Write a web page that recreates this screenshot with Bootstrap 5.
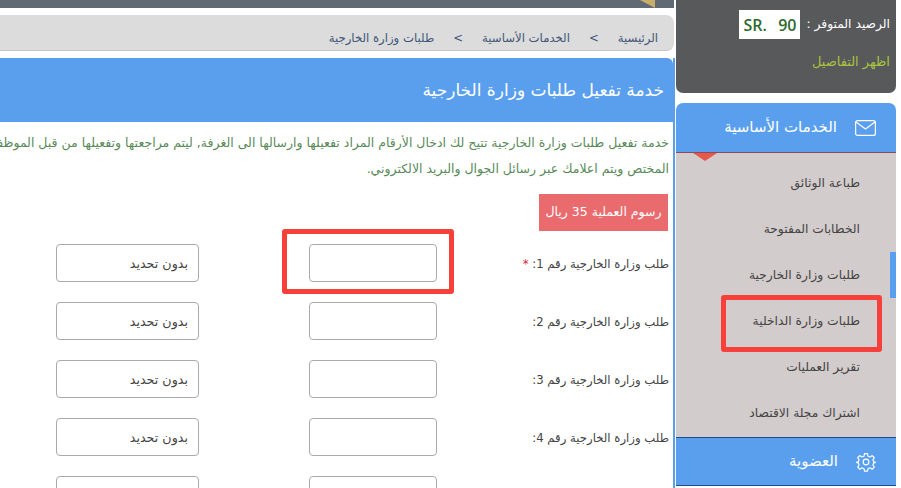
<!DOCTYPE html>
<html lang="ar" dir="rtl">
<head>
  <meta charset="UTF-8" />
  <meta name="viewport" content="width=device-width, initial-scale=1.0"/>
  <title>خدمة تفعيل طلبات وزارة الخارجية</title>
  <link href="https://cdn.jsdelivr.net/npm/bootstrap@5.3.0/dist/css/bootstrap.min.css" rel="stylesheet">
  <style>
    html, body { height: 488px; overflow: hidden; }
    body { font-family: "DejaVu Sans", "Liberation Sans", sans-serif; font-size: 11.7px; color: #444; background: #fff; }
    .page-wrap { width: 901px; height: 488px; overflow: hidden; padding-right: 5px; }
    .side-col { width: 220px; flex: none; }
    .main-col { width: 676px; flex: none; }
    .balance-box { height: 93px; background: #58595b; border-radius: 0 0 7px 7px; padding: 10px 6px 0 0; color: #fff; font-size: 12.3px; }
    .balance-row { gap: 6px; }
    .balance-val { background: #fff; color: #2d6a2d; font-family: "Open Sans", sans-serif; font-size: 16px; width: 61px; height: 29px; font-weight: 600; direction: ltr; }
    .balance-link { color: #a9c23f; margin-top: 13px; font-size: 13px; }
    .side-head { background: #5a9fee; color: #fff; font-size: 15px; padding-right: 20px; gap: 18px; }
    .side-head.first-head { margin-top: 10px; border-radius: 7px 7px 0 0; border-bottom: 1px solid #8e4a5c; height: 50px; }
    .side-head.last-head { border-top: 1px solid #1d4f8f; border-bottom: 1px solid #1d4f8f; height: 49px; }
    .side-list { background: #d3cccc; height: 284px; padding-top: 7px; position: relative; font-size: 12.3px; }
    .side-list a { display: block; height: 46px; line-height: 46px; padding-right: 36px; color: #444; text-decoration: none; }
    .side-arrow { position: absolute; top: 0; right: 179px; width: 0; height: 0; border-left: 12px solid transparent; border-right: 12px solid transparent; border-top: 8px solid #e4594b; }
    .scroll-mark { position: absolute; top: 252px; left: 890px; width: 6px; height: 46px; background: #5a9fee; }
    .top-strip { height: 8px; background: #5f6a75; position: relative; margin-right: 2px; }
    .strip-mark { position: absolute; top: 0; right: 19px; }
    .crumb-bar { height: 36px; margin: 7px 2px 0 0; background: #dcdcdc; border-bottom: 1px solid #c8c8c8; border-radius: 0 8px 8px 0; padding: 12px 16px 0 0; color: #3f5678; gap: 19px; }
    .panel-box { border-right: 2px solid #5a9fee; height: 430px; margin: 7px 1px 0 0; }
    .panel-head { height: 64px; background: #5a9fee; color: #fff; font-size: 17px; border-radius: 0 6px 0 0; padding: 2px 9px 0 0; }
    .panel-text { color: #5a8a5a; padding: 8px 4px 0 0; line-height: 26px; white-space: nowrap; height: 72px; font-size: 12.5px; }
    .fee-tag { background: #ea6b6e; color: #fff; width: 129px; height: 37px; margin: 0 5px 3px 0; font-size: 12.5px; white-space: nowrap; }
    .form-line { height: 58px; padding-right: 4px; }
    .line-label { width: 182px; flex: none; padding-top: 3px; }
    .req-mark { color: #d81f3c; }
    .field-a { width: 128px; height: 38px; border: 1px solid #aaa; border-radius: 4px; background: #fff; margin-right: 50px; flex: none; }
    .field-b { width: 143px; height: 38px; border: 1px solid #aaa; border-radius: 4px; background: #fff; margin-right: 110px; flex: none; padding: 1px 10px 0 0; font-size: 12.7px; }
    .mark-box { position: absolute; border: 5px solid #f7403a; border-radius: 3px; }
    .mark-one { left: 282px; top: 229px; width: 172px; height: 65px; }
    .mark-two { left: 721px; top: 295px; width: 161px; height: 57px; }
  </style>
</head>
<body>
  <div class="page-wrap d-flex">
    <div class="side-col">
      <div class="balance-box">
        <div class="balance-row d-flex align-items-center">
          <span>الرصيد المتوفر :</span>
          <span class="balance-val d-flex align-items-center justify-content-between px-1"><span>SR.</span><span>90</span></span>
        </div>
        <div class="balance-link">اظهر التفاصيل</div>
      </div>
      <div class="side-head first-head d-flex align-items-center">
        <svg width="21" height="16" viewBox="0 0 21 16" fill="none" stroke="#fff" stroke-width="1.2"><rect x=".6" y=".6" width="19.8" height="14.8" rx="2"/><path d="M1 2l9.5 7L20 2"/></svg>
        <span>الخدمات الأساسية</span>
      </div>
      <div class="side-list">
        <span class="side-arrow"></span>
        <a href="#">طباعة الوثائق</a>
        <a href="#">الخطابات المفتوحة</a>
        <a href="#">طلبات وزارة الخارجية</a>
        <a href="#">طلبات وزارة الداخلية</a>
        <a href="#">تقرير العمليات</a>
        <a href="#">اشتراك مجلة الاقتصاد</a>
      </div>
      <div class="side-head last-head d-flex align-items-center">
        <svg width="20" height="20" viewBox="0 0 24 24" fill="none" stroke="#fff" stroke-width="1.4" stroke-linejoin="round"><circle cx="12" cy="12" r="3.4"/><path d="M10.2 2h3.6l.6 3 2.5 1 2.6-1.7 2.5 2.6-1.7 2.5 1 2.5 3 .6v0l-3 .6-1 2.5 1.7 2.6-2.5 2.5-2.6-1.7-2.5 1-.6 3h-3.6l-.6-3-2.5-1-2.6 1.7-2.5-2.5 1.7-2.6-1-2.5-3-.6 3-.6 1-2.5-1.7-2.5 2.5-2.6 2.6 1.7 2.5-1z"/></svg>
        <span>العضوية</span>
      </div>
    </div>
    <div class="main-col">
      <div class="top-strip">
        <svg class="strip-mark" width="15" height="8" viewBox="0 0 15 8"><path d="M0 0h15v8z" fill="#c9ad6a"/></svg>
      </div>
      <div class="crumb-bar d-flex align-items-center">
        <span>الرئيسية</span><span>&gt;</span><span>الخدمات الأساسية</span><span>&gt;</span><span>طلبات وزارة الخارجية</span>
      </div>
      <div class="panel-box">
        <div class="panel-head d-flex align-items-center">خدمة تفعيل طلبات وزارة الخارجية</div>
        <div class="panel-text">خدمة تفعيل طلبات وزارة الخارجية تتيح لك ادخال الأرقام المراد تفعيلها وارسالها الى الغرفة, ليتم مراجعتها وتفعيلها من قبل الموظف<br>المختص ويتم اعلامك عبر رسائل الجوال والبريد الالكتروني.</div>
        <div class="fee-tag d-flex align-items-center justify-content-center">رسوم العملية 35 ريال</div>
        <div class="form-line d-flex align-items-center"><span class="line-label">طلب وزارة الخارجية رقم 1: <span class="req-mark">*</span></span><span class="field-a"></span><span class="field-b d-flex align-items-center">بدون تحديد</span></div>
        <div class="form-line d-flex align-items-center"><span class="line-label">طلب وزارة الخارجية رقم 2:</span><span class="field-a"></span><span class="field-b d-flex align-items-center">بدون تحديد</span></div>
        <div class="form-line d-flex align-items-center"><span class="line-label">طلب وزارة الخارجية رقم 3:</span><span class="field-a"></span><span class="field-b d-flex align-items-center">بدون تحديد</span></div>
        <div class="form-line d-flex align-items-center"><span class="line-label">طلب وزارة الخارجية رقم 4:</span><span class="field-a"></span><span class="field-b d-flex align-items-center">بدون تحديد</span></div>
        <div class="form-line d-flex align-items-center"><span class="line-label"></span><span class="field-a"></span><span class="field-b"></span></div>
      </div>
    </div>
  </div>
  <div class="scroll-mark"></div>
  <div class="mark-box mark-one"></div>
  <div class="mark-box mark-two"></div>
  <script src="https://cdn.jsdelivr.net/npm/bootstrap@5.3.0/dist/js/bootstrap.bundle.min.js"></script>
</body>
</html>
